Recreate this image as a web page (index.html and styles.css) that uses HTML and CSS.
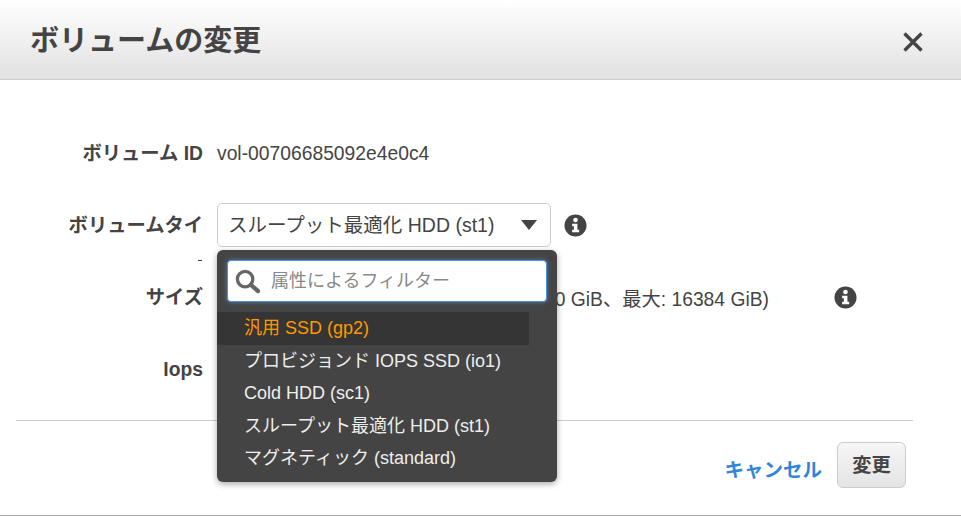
FILE: index.html
```html
<!DOCTYPE html>
<html lang="ja">
<head>
<meta charset="utf-8">
<title>ボリュームの変更</title>
<link rel="stylesheet" href="styles.css">
</head>
<body>
<div class="dialog">
  <header class="head">
    <h1 class="title">ボリュームの変更</h1>
    <svg class="close" viewBox="0 0 20 20" width="20" height="20"><path d="M1.5 1.5 L18.5 18.5 M18.5 1.5 L1.5 18.5" stroke="#444" stroke-width="3.4" fill="none"/></svg>
  </header>
  <div class="form">
    <div class="row">
      <div class="label">ボリューム ID</div>
      <div class="value">vol-00706685092e4e0c4</div>
    </div>
    <div class="row">
      <div class="label">ボリュームタイ</div>
      <div class="control">
        <span class="dash"></span>
        <div class="select">
          <span>スループット最適化 HDD (st1)</span>
          <svg class="caret" viewBox="0 0 16 10" width="16" height="10"><path d="M0 0H16L8 10Z" fill="#444"/></svg>
        </div>
        <svg class="info" viewBox="0 0 24 24" width="23" height="23"><circle cx="12" cy="12" r="11.5" fill="#444"/><circle cx="12" cy="6.2" r="2.4" fill="#fff"/><path d="M8.5 10.2H14V16.5H15.8V19H8.5V16.5H10.3V12.7H8.5Z" fill="#fff"/></svg>
        <div class="menu">
          <div class="search">
            <svg class="glass" viewBox="0 0 26 26" width="25" height="25"><circle cx="10.5" cy="10.5" r="8" fill="none" stroke="#666" stroke-width="3.4"/><path d="M16.5 16.5L24 23" stroke="#666" stroke-width="4.4" stroke-linecap="round"/></svg>
            <span class="placeholder">属性によるフィルター</span>
          </div>
          <ul class="options">
            <li class="opt on">汎用 SSD (gp2)</li>
            <li class="opt">プロビジョンド IOPS SSD (io1)</li>
            <li class="opt">Cold HDD (sc1)</li>
            <li class="opt">スループット最適化 HDD (st1)</li>
            <li class="opt">マグネティック (standard)</li>
          </ul>
        </div>
      </div>
    </div>
    <div class="row">
      <div class="label">サイズ</div>
      <div class="size">
        <span class="range">0 GiB、最大: 16384 GiB)</span>
        <svg class="info info-size" viewBox="0 0 24 24" width="23" height="23"><circle cx="12" cy="12" r="11.5" fill="#444"/><circle cx="12" cy="6.2" r="2.4" fill="#fff"/><path d="M8.5 10.2H14V16.5H15.8V19H8.5V16.5H10.3V12.7H8.5Z" fill="#fff"/></svg>
      </div>
    </div>
    <div class="row">
      <div class="label">Iops</div>
    </div>
  </div>
  <footer class="foot">
    <a class="cancel">キャンセル</a>
    <button class="btn">変更</button>
  </footer>
</div>
</body>
</html>
```
FILE: styles.css
```css
* { box-sizing: border-box; }
html, body { margin: 0; height: 516px; overflow: hidden; background: #fff; }
body { font-family: "Liberation Sans", "Noto Sans CJK JP", sans-serif; color: #444; }
.dialog { width: 961px; height: 516px; border-bottom: 1px solid #aaa; display: flex; flex-direction: column; }
.head { height: 80px; flex: none; display: flex; align-items: center; justify-content: space-between; padding: 0 38px 0 30px; background: linear-gradient(#fff, #e1e1e1); border-bottom: 1px solid #ccc; }
.title { margin: 0; font-size: 29px; font-weight: 700; color: #444; line-height: 1; padding-top: 4px; }
.close { margin-top: 5px; }
.form { flex: none; padding-top: 37px; height: 341px; border-bottom: 1px solid #ccc; margin: 0 48px 0 16px; }
.row { height: 72px; display: flex; align-items: center; font-size: 19.3px; line-height: 24px; }
.label { width: 187px; flex: none; padding-top: 2px; text-align: right; font-weight: 700; color: #444; }
.value { margin-left: 14px; padding-top: 2px; color: #444; }
.size { margin-left: 14px; display: flex; align-items: center; }
.range { width: 552px; flex: none; text-align: right; white-space: nowrap; padding-top: 6px; }
.control { margin-left: 14px; display: flex; align-items: center; position: relative; font-size: 19.5px; }
.dash { position: absolute; left: -19px; top: 57px; width: 4px; height: 1px; background: #444; }
.select { width: 334px; height: 44px; border: 1px solid #ccc; border-radius: 5px; display: flex; align-items: center; justify-content: space-between; padding: 0 13px 0 10px; background: #fff; }
.info { margin-left: 13px; flex: none; }
.info-size { margin-left: 65px; }
.menu { position: absolute; left: 0; top: 47px; width: 340px; height: 232px; background: #444; border-radius: 6px; box-shadow: 0 2px 6px rgba(0,0,0,.35); padding: 10px; }
.search { height: 42px; background: #fff; border: 1px solid #4a90e2; border-radius: 4px; box-shadow: 0 0 5px rgba(100,160,230,.6); display: flex; align-items: center; padding-left: 7px; }
.placeholder { margin-left: 11px; color: #888; font-size: 18px; }
.options { list-style: none; margin: 10px 0 0 -10px; padding: 0; }
.opt { height: 32.5px; line-height: 32px; padding-left: 27px; font-size: 18px; color: #eee; width: 312px; }
.on { color: #f90; background: #353535; }
.foot { flex: 1; display: flex; justify-content: flex-end; align-items: flex-start; padding: 21px 55px 0 0; }
.cancel { color: #2f86d9; font-size: 19.5px; font-weight: 700; margin-top: 12px; }
.btn { width: 69px; height: 46px; margin-left: 15px; border: 1px solid #ccc; border-radius: 6px; background: linear-gradient(#f6f6f6, #e4e4e4); color: #444; font: 700 19.3px "Liberation Sans", "Noto Sans CJK JP", sans-serif; padding: 0 0 2px; }
```
